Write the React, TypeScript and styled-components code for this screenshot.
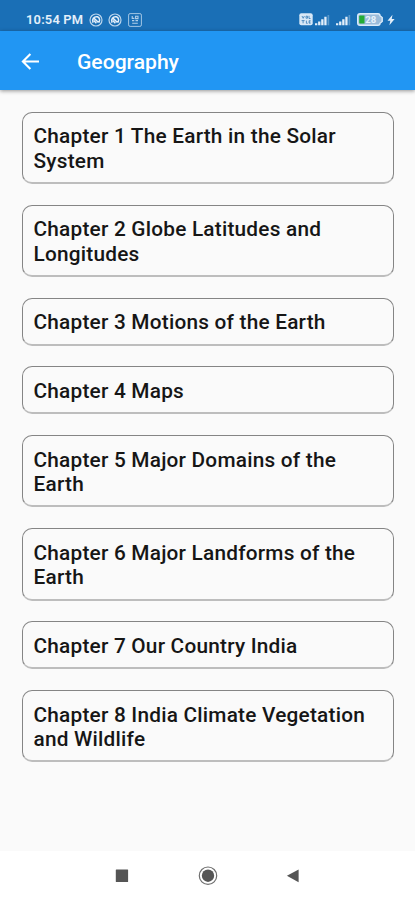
import React from "react";
import styled, { createGlobalStyle } from "styled-components";

const GlobalStyle = createGlobalStyle`
  * { box-sizing: border-box; }
  body { margin: 0; background: #fafafa; font-family: Roboto, "Liberation Sans", sans-serif; }
`;

const Screen = styled.div`
  display: flex;
  flex-direction: column;
  height: 900px;
  background: #fafafa;
  overflow: hidden;
`;

const StatusBar = styled.div`
  flex: none;
  display: flex;
  align-items: center;
  justify-content: space-between;
  height: 31px;
  padding: 8px 20.5px 0 26px;
  background: #1a6fb6;
  color: #e4effa;
`;

const StatusGroup = styled.div<{ $gap: number }>`
  display: flex;
  align-items: center;
  gap: ${(p) => p.$gap}px;

  svg { display: block; }
`;

const Clock = styled.span`
  font-size: 12.9px;
  font-weight: 600;
  line-height: 16px;
  letter-spacing: 0.2px;
  white-space: nowrap;
`;

const AppBar = styled.header`
  flex: none;
  display: flex;
  align-items: center;
  gap: 35px;
  height: 59px;
  padding: 2px 19px 0 19px;
  background: #2196f3;
  color: #fff;
  box-shadow: 0 1px 4px rgba(0, 0, 0, 0.42);
`;

const BackButton = styled.button`
  display: flex;
  padding: 0;
  border: 0;
  background: none;
  color: inherit;
`;

const Title = styled.h1`
  margin: 0;
  font-size: 21.1px;
  font-weight: 530;
  line-height: 26px;
`;

const ChapterList = styled.main`
  flex: 1;
  display: flex;
  flex-direction: column;
  gap: 20.8px;
  padding: 21.6px 20.6px 0 21.5px;
`;

const ChapterCard = styled.div`
  padding: 11.6px 11px 8.9px;
  border: 1px solid #858585;
  border-bottom: 2px solid #bdbdbd;
  border-radius: 10px;
  color: #161616;
  font-size: 20.8px;
  font-weight: 540;
  line-height: 24.4px;
  letter-spacing: 0.22px;
`;

const NavBar = styled.nav`
  flex: none;
  display: flex;
  justify-content: space-between;
  align-items: center;
  height: 49px;
  padding: 0 115px 0 115px;
  background: #fff;
  color: #555;

  svg { display: block; }
`;

const chapters = [
  "Chapter 1 The Earth in the Solar System",
  "Chapter 2 Globe Latitudes and Longitudes",
  "Chapter 3 Motions of the Earth",
  "Chapter 4 Maps",
  "Chapter 5 Major Domains of the Earth",
  "Chapter 6 Major Landforms of the Earth",
  "Chapter 7 Our Country India",
  "Chapter 8 India Climate Vegetation and Wildlife",
];

const SyncIcon = () => (
  <svg width="14" height="14" viewBox="0 0 14 14" fill="none" stroke="currentColor">
    <circle cx="7" cy="7" r="6" strokeWidth="1.2" opacity="0.8" />
    <path d="M4 9.8C2.5 6.2 5 3.2 8.4 3.8 10.8 4.6 11.2 7.6 9.8 9.5M4.6 4.9l4.9 4.6M4.8 7.5l2.6 2.8" strokeWidth="1.5" />
  </svg>
);

const NoteIcon = () => (
  <svg width="14" height="14" viewBox="0 0 14 14" fill="none" stroke="currentColor" opacity="0.75">
    <rect x="0.6" y="0.6" width="12.8" height="12.8" rx="1.5" strokeWidth="0.9" />
    <path d="M4.2 3v2.4h2.2M7.6 3.3H10v2.3H7.6zM4 7.6h2.3M7.5 7.6H10M4.2 10.2h5.6" strokeWidth="1.1" />
  </svg>
);

const VolteIcon = () => (
  <svg width="14" height="13" viewBox="0 0 14 13" fill="none">
    <rect x="0.3" y="0.3" width="13.4" height="12" rx="2" fill="#d8e8f7" />
    <path d="M3 3l1.2 2.3L5.4 3M7 3.2h1.5v2H7zM10 2.8v2.7h1.5M2.6 7.6h3M4.1 7.6v2.7M7.4 7.6v2.7h1.3M11.6 7.7h-1.5v2.5h1.5M10 9h1.4" stroke="#3479b5" strokeWidth="0.8" />
  </svg>
);

const SignalIcon = () => (
  <svg width="15" height="12" viewBox="0 0 15 12" fill="currentColor">
    <path d="M0 9.3h2.3v2H0zM3.1 7.5h2.3v3.8H3.1zM6.2 5.2h2.3v6.1H6.2zM9.3 2.7h2.3v8.6H9.3z" />
    <path d="M12.5 1H14.2v10.3h-1.7z" opacity="0.32" />
  </svg>
);

const BatteryIcon = () => (
  <svg width="26" height="13" viewBox="0 0 26 13">
    <path d="M3 .7h18q2 0 2 2l2.2 1.8v4L23 10.3q0 2-2 2H3q-2.3 0-2.3-2.3V3Q.7.7 3 .7z" fill="#9bbcda" stroke="#dcecfa" strokeWidth="1.4" />
    <path d="M3 2.4h4.5v8.2H3q-.8 0-.8-.8V3.2q0-.8.8-.8z" fill="#22ad36" />
    <text x="8.2" y="9.9" fontFamily="Roboto, sans-serif" fontSize="9.5" fontWeight="700" fill="#e8f3fc">28</text>
  </svg>
);

const BoltIcon = () => (
  <svg width="8" height="12" viewBox="0 0 8 12" fill="currentColor">
    <path d="M5.5.8L.5 6.7h2.8L2.4 11.3 7.6 5H4.7z" />
  </svg>
);

const BackIcon = () => (
  <svg width="23" height="22" viewBox="0 0 23 22" fill="none" stroke="currentColor" strokeWidth="2.1">
    <path d="M20 10.5H4.3M11.4 3L3.9 10.5l7.5 7.5" />
  </svg>
);

const RecentsIcon = () => (
  <svg width="14" height="14" viewBox="0 0 14 14">
    <rect x="0.8" y="0.6" width="12.3" height="12.3" rx="0.5" fill="currentColor" />
  </svg>
);

const HomeIcon = () => (
  <svg width="20" height="20" viewBox="0 0 20 20">
    <circle cx="10" cy="9.7" r="8.7" fill="none" stroke="currentColor" strokeWidth="1.2" opacity="0.85" />
    <circle cx="10" cy="9.7" r="6.2" fill="currentColor" />
  </svg>
);

const NavBackIcon = () => (
  <svg width="14" height="14" viewBox="0 0 14 14">
    <path d="M12.6.4v12.8L.9 6.8z" fill="currentColor" />
  </svg>
);

export default function App() {
  return (
    <Screen>
      <GlobalStyle />
      <StatusBar>
        <StatusGroup $gap={5.5}>
          <Clock>10:54 PM</Clock>
          <SyncIcon />
          <SyncIcon />
          <NoteIcon />
        </StatusGroup>
        <StatusGroup $gap={6}>
          <StatusGroup $gap={2}>
            <VolteIcon />
            <SignalIcon />
          </StatusGroup>
          <SignalIcon />
          <StatusGroup $gap={3.5}>
            <BatteryIcon />
            <BoltIcon />
          </StatusGroup>
        </StatusGroup>
      </StatusBar>
      <AppBar>
        <BackButton aria-label="Back">
          <BackIcon />
        </BackButton>
        <Title>Geography</Title>
      </AppBar>
      <ChapterList>
        {chapters.map((chapter) => (
          <ChapterCard key={chapter}>{chapter}</ChapterCard>
        ))}
      </ChapterList>
      <NavBar>
        <RecentsIcon />
        <HomeIcon />
        <NavBackIcon />
      </NavBar>
    </Screen>
  );
}
